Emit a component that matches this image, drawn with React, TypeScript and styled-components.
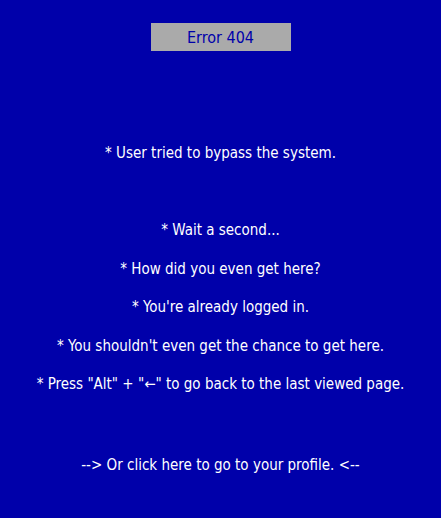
import React from 'react';
import styled, { createGlobalStyle } from 'styled-components';

const GlobalStyle = createGlobalStyle`
    html, body {
        margin: 0;
        padding: 0;
        background: #0000aa;
    }
`

const Screen = styled.div`
    min-height: 518px;
    background: #0000aa;
    color: #ffffff;
    font-family: "Liberation Sans Narrow", "DejaVu Sans Condensed", sans-serif;
    font-size: 15px;
    text-align: center;
    display: flex;
    flex-direction: column;
    align-items: center;
    padding-top: 23px;
    box-sizing: border-box;
`

const Badge = styled.div`
    width: 140px;
    height: 28px;
    background: #aaaaaa;
    color: #0000aa;
    font-size: 16px;
    display: flex;
    align-items: center;
    justify-content: center;
`

const Line = styled.p<{ $gap: number }>`
    margin: ${p => p.$gap}px 0 0;
    line-height: 20px;
`

const ProfileLink = styled.a`
    color: #ffffff;
    text-decoration: none;
    cursor: pointer;
`

const messages = [
    "* Wait a second...",
    "* How did you even get here?",
    "* You're already logged in.",
    "* You shouldn't even get the chance to get here.",
    "* Press \"Alt\" + \"\u2190\" to go back to the last viewed page.",
]

const App = () => {
    return (
        <Screen>
            <GlobalStyle />
            <Badge>Error 404</Badge>
            <Line $gap={92}>* User tried to bypass the system.</Line>
            {messages.map((m, i) => (
                <Line key={m} $gap={i === 0 ? 57 : 18.5}>{m}</Line>
            ))}
            <Line $gap={61}>
                <ProfileLink>--&gt; Or click here to go to your profile. &lt;--</ProfileLink>
            </Line>
        </Screen>
    )
}

export default App
